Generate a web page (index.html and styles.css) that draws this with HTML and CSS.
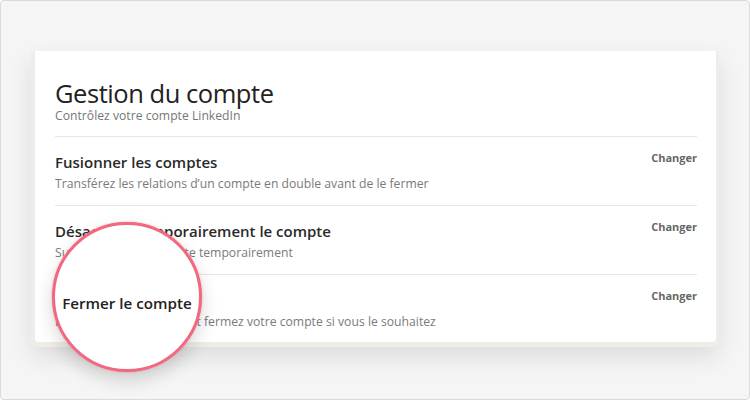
FILE: index.html
```html
<!DOCTYPE html>
<html lang="fr">
<head>
<meta charset="utf-8">
<title>Gestion du compte</title>
<link rel="stylesheet" href="styles.css">
</head>
<body>
<div class="frame">
  <div class="shot">
    <div class="card">
      <header class="head">
        <h1 class="title">Gestion du compte</h1>
        <p class="subtitle">Contrôlez votre compte LinkedIn</p>
      </header>
      <div class="row">
        <div class="row-text">
          <h2 class="row-title">Fusionner les comptes</h2>
          <p class="row-desc">Transférez les relations d’un compte en double avant de le fermer</p>
        </div>
        <a class="change">Changer</a>
      </div>
      <div class="row">
        <div class="row-text">
          <h2 class="row-title">Désactiver temporairement le compte</h2>
          <p class="row-desc">Suspendez votre compte temporairement</p>
        </div>
        <a class="change">Changer</a>
      </div>
      <div class="row row-last">
        <div class="row-text">
          <h2 class="row-title">Fermer le compte</h2>
          <p class="row-desc">Découvrez vos options, et fermez votre compte si vous le souhaitez</p>
        </div>
        <a class="change">Changer</a>
      </div>
    </div>
  </div>
  <div class="magnifier"><span class="magnifier-text">Fermer le compte</span></div>
</div>
</body>
</html>
```

FILE: styles.css
```css
html, body {
  margin: 0;
  padding: 0;
  background: #ffffff;
}
body {
  font-family: "Open Sans", "Liberation Sans", sans-serif;
}
.frame {
  position: relative;
  box-sizing: border-box;
  width: 750px;
  height: 400px;
  border: 1px solid #dadada;
  border-radius: 4px;
  background: #f5f5f5;
  padding: 50px 0 0 30px;
  overflow: hidden;
}
.shot {
  width: 688px;
  box-sizing: border-box;
  background: #efede8;
  padding: 0 3px 5px 4px;
  border-radius: 0 0 6px 6px;
  box-shadow: 0 10px 24px rgba(0, 0, 0, 0.10);
}
.card {
  background: #ffffff;
  border-radius: 0 0 4px 4px;
  padding: 0 19px 0 20px;
}
.head {
  padding-top: 27px;
  border-bottom: 1px solid #e6e6e6;
  padding-bottom: 13px;
}
.title {
  margin: 0;
  font-size: 25.5px;
  font-weight: 400;
  letter-spacing: -0.45px;
  line-height: 30px;
  color: #222222;
}
.subtitle {
  margin: 0;
  font-size: 12.2px;
  line-height: 15px;
  color: #777777;
}
.row {
  display: flex;
  justify-content: space-between;
  align-items: flex-start;
  padding: 15px 0 13px;
  border-bottom: 1px solid #e6e6e6;
}
.row-last {
  border-bottom: none;
  padding-bottom: 12px;
}
.row-title {
  margin: 0;
  font-size: 15px;
  font-weight: 600;
  line-height: 20px;
  color: #2a2a2a;
}
.row-desc {
  margin: 4px 0 0;
  font-size: 12.2px;
  line-height: 16px;
  color: #7a7a7a;
}
.change {
  margin-top: -2px;
  font-size: 11px;
  font-weight: 700;
  line-height: 16px;
  color: #666666;
}
.magnifier {
  position: absolute;
  left: 51px;
  top: 221px;
  width: 150px;
  height: 150px;
  box-sizing: border-box;
  border: 3px solid #f1687f;
  border-radius: 50%;
  background: #ffffff;
  box-shadow: 0 0 2px rgba(241, 104, 127, 0.6), 0 8px 18px rgba(0, 0, 0, 0.16);
  display: flex;
  align-items: center;
  justify-content: center;
  padding-top: 12px;
}
.magnifier-text {
  font-size: 15.2px;
  font-weight: 600;
  color: #222222;
  white-space: nowrap;
}
```
